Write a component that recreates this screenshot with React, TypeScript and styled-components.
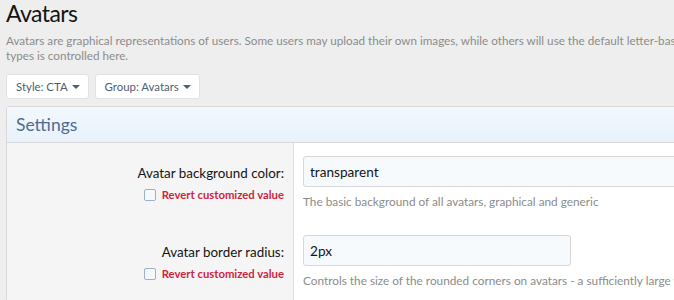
import React from "react"
import styled, { createGlobalStyle } from "styled-components"

const Global = createGlobalStyle`
   body {
      margin: 0;
      background: #eeeeee;
      font-family: "Segoe UI", Lato, "Open Sans", sans-serif;
      color: #141414;
      overflow: hidden;
   }
`

const Page = styled.div`
   padding: 0 6px;
   width: 900px;
`

const Title = styled.h1`
   margin: 0;
   font-size: 23px;
   font-weight: 400;
   letter-spacing: -0.6px;
   line-height: 27px;
   color: #141414;
`

const Description = styled.p`
   margin: 6px 0 0;
   font-size: 11.7px;
   line-height: 15px;
   color: #8c8c8c;
   width: 870px;
`

const Buttons = styled.div`
   display: flex;
   gap: 6px;
   margin-top: 11px;
`

const MenuButton = styled.button`
   display: flex;
   align-items: center;
   gap: 4px;
   height: 25px;
   padding: 0 8px 0 9px;
   background: #fff;
   border: 1px solid #e2e2e2;
   border-radius: 3px;
   font: inherit;
   font-size: 11.4px;
   color: #4f5d73;
   &::after {
      content: "";
      border-left: 4px solid transparent;
      border-right: 4px solid transparent;
      border-top: 4px solid #4f5d73;
   }
`

const Block = styled.div`
   margin-top: 7px;
   border: 1px solid #d8d8d8;
   border-radius: 3px;
   background: #fff;
`

const Header = styled.h2`
   margin: 0;
   padding: 0 9px;
   height: 35px;
   display: flex;
   align-items: center;
   font-size: 17.5px;
   font-weight: 400;
   color: #4d6d93;
   background: linear-gradient(to bottom, #f2f8fd, #e8f2fb);
   border-bottom: 1px solid #d8d8d8;
`

const Row = styled.div`
   display: flex;
`

const LabelCol = styled.div`
   width: 287px;
   flex: none;
   box-sizing: border-box;
   padding: 22px 9px 0 0;
   background: #f5f5f5;
   border-right: 1px solid #dfdfdf;
   text-align: right;
`

const Label = styled.div`
   font-size: 13.4px;
   line-height: 16px;
   color: #141414;
`

const Revert = styled.label`
   display: inline-flex;
   align-items: center;
   gap: 6px;
   margin-top: 7px;
   font-size: 11.3px;
   font-weight: 700;
   color: #d0243f;
   &::before {
      content: "";
      width: 10px;
      height: 10px;
      border: 1px solid #9bb0cc;
      border-radius: 2px;
      background: #f6f9fc;
   }
`

const FieldCol = styled.div`
   flex: 1;
   padding: 13px 0 12px 9px;
`

const Input = styled.div<{ $width?: number }>`
   box-sizing: border-box;
   width: ${({ $width }) => ($width ? `${$width}px` : "100%")};
   height: 31px;
   padding: 0 6px;
   display: flex;
   align-items: center;
   background: #f6fafd;
   border: 1px solid #d8d8d8;
   border-radius: 3px;
   font-size: 13.6px;
   color: #141414;
`

const Hint = styled.div`
   margin-top: 6px;
   font-size: 11.8px;
   line-height: 17px;
   color: #8c8c8c;
   white-space: nowrap;
`

const rows = [
   {
      label: "Avatar background color:",
      value: "transparent",
      hint: "The basic background of all avatars, graphical and generic",
   },
   {
      label: "Avatar border radius:",
      value: "2px",
      width: 268,
      hint: "Controls the size of the rounded corners on avatars - a sufficiently large value will make avatars circular",
   },
]

export default function App() {
   return (
      <Page>
         <Global />
         <Title>Avatars</Title>
         <Description>
            Avatars are graphical representations of users. Some users may upload their own images, while others will use the default letter-based avatars. The appearance of both types is controlled here.
         </Description>
         <Buttons>
            <MenuButton>Style: CTA</MenuButton>
            <MenuButton>Group: Avatars</MenuButton>
         </Buttons>
         <Block>
            <Header>Settings</Header>
            {rows.map((r) => (
               <Row key={r.label}>
                  <LabelCol>
                     <Label>{r.label}</Label>
                     <Revert>Revert customized value</Revert>
                  </LabelCol>
                  <FieldCol>
                     <Input $width={r.width}>{r.value}</Input>
                     <Hint>{r.hint}</Hint>
                  </FieldCol>
               </Row>
            ))}
         </Block>
      </Page>
   )
}
